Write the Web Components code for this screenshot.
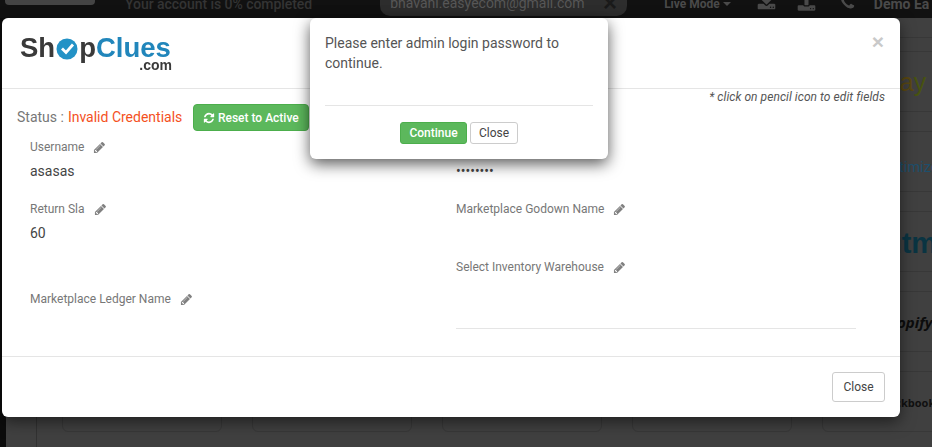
<!DOCTYPE html>
<html>
<head>
<meta charset="utf-8">
<title>ShopClues</title>
<style>
html, body { margin: 0; height: 100%; overflow: hidden; background: #404040; }
body { font-family: Roboto, "Liberation Sans", Arial, sans-serif; }
</style>
</head>
<body>
<app-backdrop>
  <market-card class="blank"></market-card><market-card class="blank"></market-card><market-card class="blank"></market-card><market-card class="blank"></market-card>
  <market-card><span style="font:400 25px 'Liberation Sans';margin-left:49px;margin-top:2px"><span style="color:#40130f">e</span><span style="color:#0c2a4a">b</span><span style="color:#5a4810">a</span><span style="color:#48530f">y</span></span></market-card>
  <market-card class="blank"></market-card><market-card class="blank"></market-card><market-card class="blank"></market-card><market-card class="blank"></market-card>
  <market-card><span style="font:400 14.5px Roboto;margin-left:58px;margin-top:12px;color:#1d4f6c">Optimizely</span></market-card>
  <market-card class="blank"></market-card><market-card class="blank"></market-card><market-card class="blank"></market-card><market-card class="blank"></market-card>
  <market-card><span style="font:700 29px 'Liberation Sans';margin-left:61px;margin-top:4px;color:#0a3442">utm</span></market-card>
  <market-card class="blank"></market-card><market-card class="blank"></market-card><market-card class="blank"></market-card><market-card class="blank"></market-card>
  <market-card><span style="font:italic 700 15px 'Open Sans';margin-left:57px;color:#0c0c0c">Shopify</span></market-card>
  <market-card class="blank"></market-card><market-card class="blank"></market-card><market-card class="blank"></market-card><market-card class="blank"></market-card>
  <market-card><span style="font:700 11px 'Open Sans';margin-left:53px;margin-top:2px;color:#101010">Quickbooks</span></market-card>
  <market-card class="blank"></market-card><market-card class="blank"></market-card><market-card class="blank"></market-card><market-card class="blank"></market-card>
</app-backdrop>

<shop-modal>
  <shop-logo slot="logo"></shop-logo>
  <field-item label="Username" value="asasas" style="height:62px"></field-item>
  <field-item label="Return Sla" value="60" style="height:90px"></field-item>
  <field-item label="Marketplace Ledger Name"></field-item>
  <field-item slot="right" value="••••••••" style="height:62px"></field-item>
  <field-item slot="right" label="Marketplace Godown Name" style="height:58px"></field-item>
  <field-item slot="right" label="Select Inventory Warehouse" underline></field-item>
</shop-modal>

<confirm-popup>Please enter admin login password to continue.</confirm-popup>

<script>
const FA = {
    pencil: "M491 1536l91-91-235-235-91 91v107h128v128h107zm523-928q0-22-22-22-10 0-17 7l-542 542q-7 7-7 17 0 22 22 22 10 0 17-7l542-542q7-7 7-17zm-54-192l416 416-832 832h-416v-416zm683 96q0 53-37 90l-166 166-416-416 166-165q36-38 90-38 53 0 91 38l235 234q37 39 37 91z",
    refresh: "M1639 1056q0 5-1 7-64 268-268 434.5t-478 166.5q-146 0-282.5-55t-243.5-157l-129 129q-19 19-45 19t-45-19-19-45v-448q0-26 19-45t45-19h448q26 0 45 19t19 45-19 45l-137 137q71 66 161 102t187 36q134 0 250-65t186-179q11-17 53-117 8-23 30-23h192q13 0 22.5 9.5t9.5 22.5zm25-800v448q0 26-19 45t-45 19h-448q-26 0-45-19t-19-45 19-45l138-138q-148-137-349-137-134 0-250 65t-186 179q-11 17-53 117-8 23-30 23h-199q-13 0-22.5-9.5t-9.5-22.5v-7q65-268 270-434.5t480-166.5q146 0 284 55.5t245 156.5l130-129q19-19 45-19t45 19 19 45z",
    download: "M1344 1344q0-26-19-45t-45-19-45 19-19 45 19 45 45 19 45-19 19-45zm256 0q0-26-19-45t-45-19-45 19-19 45 19 45 45 19 45-19 19-45zm128-224v320q0 40-28 68t-68 28h-1472q-40 0-68-28t-28-68v-320q0-40 28-68t68-28h465l135 136q58 56 136 56t136-56l136-136h464q40 0 68 28t28 68zm-325-569q17 41-14 70l-448 448q-18 19-45 19t-45-19l-448-448q-31-29-14-70 17-39 59-39h256v-448q0-26 19-45t45-19h256q26 0 45 19t19 45v448h256q42 0 59 39z",
    upload: "M1344 1472q0-26-19-45t-45-19-45 19-19 45 19 45 45 19 45-19 19-45zm256 0q0-26-19-45t-45-19-45 19-19 45 19 45 45 19 45-19 19-45zm128-224v320q0 40-28 68t-68 28h-1472q-40 0-68-28t-28-68v-320q0-40 28-68t68-28h427q21 56 70.5 92t110.5 36h256q61 0 110.5-36t70.5-92h427q40 0 68 28t28 68zm-325-648q-17 40-59 40h-256v448q0 26-19 45t-45 19h-256q-26 0-45-19t-19-45v-448h-256q-42 0-59-40-17-39 14-69l448-448q18-19 45-19t45 19l448 448q31 30 14 69z",
    phone: "M1600 1240q0 27-10 70.5t-21 68.5q-21 50-122 106-94 51-186 51-27 0-53-3.5t-57.5-12.5-47-14.5-55.5-20.5-49-18q-98-35-175-83-127-79-264-216t-216-264q-48-77-83-175-3-9-18-49t-20.5-55.5-14.5-47-12.5-57.5-3.5-53q0-92 51-186 56-101 106-122 25-11 68.5-21t70.5-10q14 0 21 3 18 6 53 76 11 19 30 54t35 63.5 31 53.5q3 4 17.5 25t21.5 35.5 7 28.5q0 20-28.5 50t-62 55-62 53-28.5 46q0 9 5 22.5t8.5 20.5 14 24 11.5 19q76 137 174 235t235 174q2 1 19 11.5t24 14 20.5 8.5 22.5 5q18 0 46-28.5t53-62 55-62 50-28.5q14 0 28.5 7t35.5 21.5 25 17.5q25 15 53.5 31t63.5 35 54 30q70 35 76 53 3 7 3 21z"
};

function faIcon(name, size) {
    return `<svg width="${size}" height="${size}" viewBox="0 0 1792 1792" fill="currentColor"><path d="${FA[name]}"/></svg>`;
}

class appBackdrop extends HTMLElement {
    constructor() {
        super();
        this.attachShadow({ mode: "open" });
        this.shadowRoot.innerHTML = `
        <style>
        :host { display: block; height: 447px; overflow: hidden; background: #404040; }
        .bar {
            height: 18px;
            background: #111;
            overflow: hidden;
            display: flex;
            font-size: 14px;
            white-space: nowrap;
            color: #333;
        }
        .bar > * { flex: none; }
        .row { display: flex; align-items: center; height: 8px; }
        .search { width: 90px; height: 5px; margin-left: 5px; background: #444; border-radius: 0 0 4px 4px; }
        .account { margin-left: 30px; letter-spacing: -.05px; color: #343434; font-weight: 500; }
        .email {
            width: 247px; height: 16px; margin-left: 68px; box-sizing: border-box;
            background: #2d2d2d; border-radius: 0 0 10px 10px; padding: 0 10px;
            display: flex; justify-content: space-between; align-items: flex-start;
            color: #575757; line-height: 7px;
        }
        .email b { font: 700 24px/6px "Liberation Sans"; color: #1a1a1a; }
        .mode { margin-left: 37px; font-weight: 700; font-size: 12px; color: #4a4a4a; }
        .caret { display: inline-block; margin-left: 3px; vertical-align: 2px; border: 4px solid transparent; border-top-color: #4a4a4a; border-bottom: 0; }
        .ico { color: #4a4a4a; display: flex; }
        .ico svg { display: block; }
        .demo { margin-left: 18px; font-weight: 700; color: #4a4a4a; }
        .page { display: flex; height: 429px; }
        .edge { width: 6px; background: #0c0c0c; flex: none; }
        .side { width: 30px; flex: none; border-right: 1px solid #323232; margin-right: -1px; }
        .main { flex: none; margin-left: 26px; padding-top: 19px; }
        .rule { height: 1px; margin-bottom: 13px; background: #383838; }
        .grid {
            display: grid;
            grid-template-columns: repeat(5, 160px);
            grid-auto-rows: 61px;
            gap: 19px 30px;
        }
        </style>
        <div class="bar">
            <div class="search"></div>
            <div class="row account">Your account is 0% completed</div>
            <div class="email"><span>bhavani.easyecom@gmail.com</span><b>×</b></div>
            <div class="row mode">Live Mode<span class="caret"></span></div>
            <div class="ico" style="margin-left:26px;margin-top:-7px">${faIcon("download", 19)}</div>
            <div class="ico" style="margin-left:21px;margin-top:-7px">${faIcon("upload", 19)}</div>
            <div class="ico" style="margin-left:23px;margin-top:-6px">${faIcon("phone", 17)}</div>
            <div class="row demo">Demo Ea</div>
        </div>
        <div class="page">
            <div class="edge"></div>
            <div class="side"></div>
            <div class="main">
                <div class="rule"></div>
                <div class="grid"><slot></slot></div>
            </div>
        </div>`;
    }
}

class marketCard extends HTMLElement {
    constructor() {
        super();
        this.attachShadow({ mode: "open" });
        this.shadowRoot.innerHTML = `
        <style>
        :host {
            display: flex; align-items: center; width: 160px; height: 61px;
            box-sizing: border-box; overflow: visible; white-space: nowrap;
            border: 1px solid #383838; border-radius: 6px;
        }
        </style>
        <slot></slot>`;
    }
}

class shopLogo extends HTMLElement {
    constructor() {
        super();
        this.attachShadow({ mode: "open" });
        this.shadowRoot.innerHTML = `
        <style>
        :host { display: block; width: 152px; filter: blur(.35px); }
        .name { display: flex; align-items: center; height: 26px; font: 700 27.5px/26px "Liberation Sans", sans-serif; color: #3a3a3a; }
        .name svg { flex: none; }
        .blue { color: #2186bb; }
        .com { margin-top: -3px; font: 700 14px/14px "Liberation Sans", sans-serif; color: #3a3a3a; text-align: right; }
        </style>
        <div class="name">Sh<svg width="24" height="25" viewBox="0 0 24 25"><circle cx="12" cy="13" r="10.5" fill="#2392c6"/><path d="M7 12.5l4 4 7-8" fill="none" stroke="#fff" stroke-width="2.8"/></svg>p<span class="blue">Clues</span></div>
        <div class="com">.com</div>`;
    }
}

class fieldItem extends HTMLElement {
    constructor() {
        super();
        this.attachShadow({ mode: "open" });
    }

    connectedCallback() {
        const label = this.getAttribute("label");
        const value = this.getAttribute("value");
        this.shadowRoot.innerHTML = `
        <style>
        :host { display: block; }
        .label { display: flex; align-items: center; height: 18px; font-size: 12px; color: #777; gap: 9px; }
        .label svg { color: #808080; }
        .value { margin-top: 6px; font-size: 14px; line-height: 18px; color: #444; height: 18px; }
        .line { margin-top: 52px; width: 400px; border-bottom: 1px solid #e5e5e5; }
        </style>
        <div class="label">${label ? `<span>${label}</span>${faIcon("pencil", 13)}` : ""}</div>
        ${value ? `<div class="value">${value}</div>` : ""}
        ${this.hasAttribute("underline") ? `<div class="line"></div>` : ""}`;
    }
}

class shopModal extends HTMLElement {
    constructor() {
        super();
        this.attachShadow({ mode: "open" });
        this.shadowRoot.innerHTML = `
        <style>
        :host {
            position: absolute; left: 2px; top: 18px; width: 898px; height: 399px;
            box-sizing: border-box;
            display: flex; flex-direction: column;
            background: #fff; border-radius: 6px;
            box-shadow: 0 5px 15px rgba(0,0,0,.5);
        }
        header { height: 71px; flex: none; box-sizing: border-box; padding: 17px 16px 0 18px; border-bottom: 1px solid #e5e5e5; display: flex; justify-content: space-between; }
        .x { font: 700 21px/21px "Liberation Sans", sans-serif; color: #c9c9c9; margin-top: -4px; }
        main { flex: 1; min-height: 0; padding: 0 15px; }
        .hint { text-align: right; font: italic 12px/16px Roboto, sans-serif; letter-spacing: .06px; color: #555; }
        .status { display: flex; align-items: center; height: 27px; margin-top: -1px; font-size: 14px; color: #777; }
        .status span { margin-top: -2px; }
        .status em { font-style: normal; color: #f4511e; margin-left: .5px; }
        .status button {
            margin-left: 10.5px; height: 27px; width: 116px; padding: 0;
            display: inline-flex; align-items: center; justify-content: center; gap: 3px;
            background: #5cb85c; border: 1px solid #4cae4c; border-radius: 4px;
            color: #fff; font: 500 12px Roboto, sans-serif;
        }
        .cols { display: grid; grid-template-columns: 426px 1fr; padding: 7px 0 0 13px; }
        footer { height: 61px; flex: none; box-sizing: border-box; border-top: 1px solid #e5e5e5; padding: 15px; display: flex; justify-content: flex-end; }
        footer button {
            width: 53px; height: 30px; background: #fff; border: 1px solid #ccc; border-radius: 3px;
            color: #444; font: 12px Roboto, sans-serif; padding: 0;
        }
        </style>
        <header><slot name="logo"></slot><span class="x">×</span></header>
        <main>
            <div class="hint">* click on pencil icon to edit fields</div>
            <div class="status"><span>Status : <em>Invalid Credentials</em></span><button>${faIcon("refresh", 12)}Reset to Active</button></div>
            <div class="cols">
                <div><slot></slot></div>
                <div><slot name="right"></slot></div>
            </div>
        </main>
        <footer><button>Close</button></footer>`;
    }
}

class confirmPopup extends HTMLElement {
    constructor() {
        super();
        this.attachShadow({ mode: "open" });
        this.shadowRoot.innerHTML = `
        <style>
        :host {
            position: absolute; left: 310px; top: 18px; width: 298px; height: 141px;
            box-sizing: border-box; padding: 15px;
            background: #fff; border-radius: 6px;
            box-shadow: 0 5px 15px rgba(0,0,0,.65);
        }
        .msg { height: 73px; box-sizing: border-box; font-size: 14px; line-height: 20px; color: #555; border-bottom: 1px solid #e5e5e5; }
        .btns { display: flex; justify-content: center; gap: 3px; margin-top: 16px; }
        button { height: 22px; padding: 0; border-radius: 3px; font: 12px Roboto, sans-serif; }
        .ok { width: 67px; background: #5cb85c; border: 1px solid #4cae4c; color: #fff; font-weight: 500; }
        .no { width: 48px; background: #fff; border: 1px solid #ccc; color: #444; }
        </style>
        <div class="msg"><slot></slot></div>
        <div class="btns"><button class="ok">Continue</button><button class="no">Close</button></div>`;
    }
}

customElements.define("app-backdrop", appBackdrop);
customElements.define("market-card", marketCard);
customElements.define("shop-logo", shopLogo);
customElements.define("field-item", fieldItem);
customElements.define("shop-modal", shopModal);
customElements.define("confirm-popup", confirmPopup);
</script>
</body>
</html>
